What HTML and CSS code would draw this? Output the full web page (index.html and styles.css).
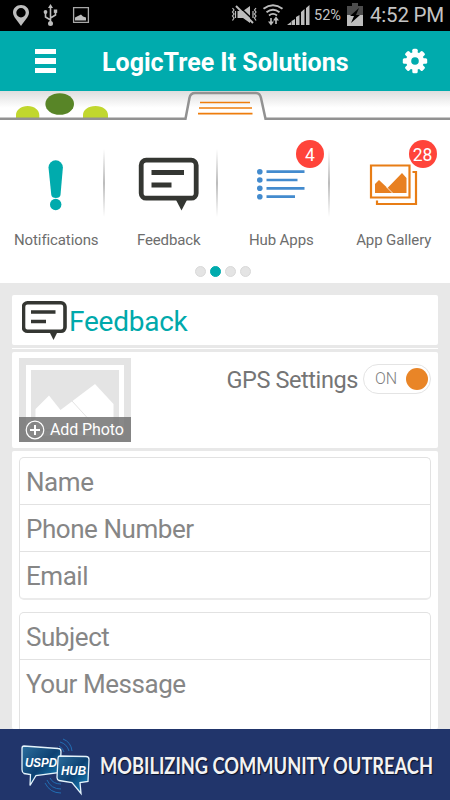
FILE: index.html
```html
<!DOCTYPE html>
<html lang="en">
<head>
    <meta charset="UTF-8">
    <meta name="viewport" content="width=device-width, initial-scale=1.0">
    <title>LogicTree It Solutions</title>
    <link rel="stylesheet" href="styles.css">
</head>
<body>
    <!-- Status bar -->
    <div class="status">
        <svg class="status-left" width="100" height="31" viewBox="0 0 100 31" fill="#bdbdbd">
            <path fill-rule="evenodd" d="M21 5c-4.600 0-8 3.300-8 7.500 0 4.600 5 8.500 8 13.500 3-5 8-8.900 8-13.500C29 8.300 25.600 5 21 5zm0 3a4.700 4.700 0 1 1 0 9.400 4.700 4.700 0 0 1 0-9.400z"/>
            <path d="M50.500 24V7M50.500 20l-5-3v-5M50.500 18l5-3v-4" fill="none" stroke="#bdbdbd" stroke-width="1.600"/>
            <path d="M50.500 4l2.500 4h-5z"/>
            <circle cx="50.500" cy="23.500" r="2.500"/>
            <circle cx="45.500" cy="12" r="1.900"/>
            <path d="M53.800 9.500h3.400v3.400h-3.400z"/>
            <path d="M73.600 7.600h14.800v14.800H73.600z" fill="none" stroke="#a8a8a8" stroke-width="1.300"/>
            <path d="M75 20.500v-3l3-1.500 3-1.500 2 2 3 1v3z"/>
        </svg>
        <svg class="status-right" width="83" height="31" viewBox="0 0 83 31" fill="#bdbdbd">
            <path d="M7.500 11h5.500l7-5v17l-7-5H7.500z"/>
            <path d="M8.500 6l17 16" stroke="#000" stroke-width="1.500"/>
            <path d="M6 6l17 17" stroke="#bdbdbd" stroke-width="2"/>
            <path d="M2.500 8l1.500 2-1.500 2 1.500 2-1.500 2 1.500 2-1.500 2.500M5.500 11v7M26 8l-1.500 2 1.500 2-1.500 2 1.500 2-1.500 2 1.500 2.500M23 11v7" fill="none" stroke="#bdbdbd" stroke-width="1.200"/>
            <g fill="none" stroke="#bdbdbd" stroke-width="1.900">
                <path d="M33.500 8.800q9.500-7 19 0M36.500 12.300q6.500-5 13 0M39 15.400q4-3 8 0"/>
                <path d="M41 18v5M46 24v-5" stroke-width="1.600"/>
            </g>
            <path d="M38 21.500h6l-3 4zM43 20.500h6l-3-4z"/>
            <path d="M57 25l4-3v3zM61.500 21l3.500-2v6h-3.500zM66 17l3.500-2v10h-3.500zM71 12l3.500-3v16h-3.500zM76 8l3.500-3v20h-3.500z"/>
        </svg>
        <span class="percent">52%</span>
        <svg class="battery" width="16" height="31" viewBox="0 0 16 31">
            <path d="M5 3h6v3h5v20H0V6h5z" fill="#4c4c4c"/>
            <path d="M0 15h16v11H0z" fill="#bdbdbd"/>
            <path d="M12 8L3 16h4l-3 7 9-8H9z" fill="#000"/>
        </svg>
        <span class="clock">4:52 PM</span>
    </div>

    <!-- Title bar -->
    <header class="header">
        <div class="burger"><i></i><i></i><i></i></div>
        <h1>LogicTree It Solutions</h1>
        <svg class="gear" width="26" height="26" viewBox="-13 -13 26 26">
            <g fill="#fff">
                <rect id="tooth" x="-2.700" y="-12.200" width="5.400" height="24.400" rx="1.500"/>
                <use href="#tooth" transform="rotate(45)"/>
                <use href="#tooth" transform="rotate(90)"/>
                <use href="#tooth" transform="rotate(135)"/>
                <circle r="9"/>
            </g>
            <circle r="3.800" fill="#00abad"/>
        </svg>
    </header>

    <!-- Pull-down tab -->
    <svg class="tab" width="450" height="30" viewBox="0 0 450 30">
        <defs>
            <linearGradient id="shade" x1="0" y1="0" x2="0" y2="1">
                <stop offset="0" stop-color="#dedede"/>
                <stop offset="0.600" stop-color="#fff"/>
            </linearGradient>
        </defs>
        <rect width="450" height="28" fill="url(#shade)"/>
        <ellipse cx="59.700" cy="13" rx="14.300" ry="10.800" fill="#588527"/>
        <path d="M16 28v-4c0-5 5-9 11.700-9s11.600 4 11.600 9v4zM83 28v-4c0-5 5-9 12.500-9s12.500 4 12.500 9v4z" fill="#c1d72e"/>
        <path d="M0 27.700h185.500l4-21q1-4.700 5.500-4.700h61q4 0 5 5l4.500 20.700H450" fill="none" stroke="#929292" stroke-width="2.500"/>
        <path d="M200 11.500h50M199 17h53M198 22.700h54.500" stroke="#ee7d0c" stroke-width="1.700"/>
    </svg>

    <!-- Icon menu -->
    <nav class="menu">
        <a class="item">
            <svg class="icon" width="70" height="70" viewBox="0 0 70 70" fill="#00abad">
                <path d="M27.500 19.500a7.200 7.200 0 0 1 14.400 0l-2.400 27.500q-.5 3-4.600 3t-4.600-3z"/>
                <circle cx="34.700" cy="56.500" r="5.700"/>
            </svg>
            <span>Notifications</span>
        </a>
        <a class="item">
            <svg class="icon" width="70" height="70" viewBox="0 0 70 70">
                <path d="M41 50h13l-6.500 12.500z" fill="#343632"/>
                <rect x="7.200" y="12.200" width="55" height="38" rx="5" fill="#fff" stroke="#343632" stroke-width="4.800"/>
                <path d="M17.500 24.500H50M17.500 37H37.500" stroke="#343632" stroke-width="5"/>
            </svg>
            <span>Feedback</span>
        </a>
        <a class="item">
            <svg class="icon" width="70" height="70" viewBox="0 0 70 70">
                <path d="M20.500 23.700h38M20.500 32h31M20.500 40.300h38M20.500 48.700h28.500" stroke="#438bce" stroke-width="2.700"/>
                <g fill="#438bce">
                    <circle cx="13.800" cy="23.700" r="2.800"/><circle cx="13.800" cy="32" r="2.800"/>
                    <circle cx="13.800" cy="40.300" r="2.800"/><circle cx="13.800" cy="48.700" r="2.800"/>
                </g>
            </svg>
            <span>Hub Apps</span>
            <b class="badge">4</b>
        </a>
        <a class="item">
            <svg class="icon" width="70" height="70" viewBox="0 0 70 70">
                <g fill="none" stroke="#e87d15" stroke-width="2.200">
                    <path d="M12 17.500h38.500v32H12zM18 52.500v3.500h39v-32h-3.500"/>
                </g>
                <path d="M16 45v-9l4-4 8.500 8L43 25l4.500 5v15z" fill="#e88021"/>
                <path d="M27.500 39l6 6" stroke="#fff" stroke-width=".8"/>
            </svg>
            <span>App Gallery</span>
            <b class="badge">28</b>
        </a>
    </nav>
    <div class="dots"><i></i><i class="on"></i><i></i><i></i></div>

    <!-- Feedback form -->
    <main class="content">
        <section class="card card-title">
            <svg width="46" height="40" viewBox="0 0 46 40">
                <path d="M27 30h9l-4.500 9z" fill="#343632"/>
                <rect x="1.500" y="1.800" width="41.500" height="28.500" rx="4" fill="#fff" stroke="#343632" stroke-width="3.600"/>
                <path d="M9 11h24.500M9 20.500h15" stroke="#343632" stroke-width="3.600"/>
            </svg>
            <h2>Feedback</h2>
        </section>
        <hr class="rule">
        <section class="card card-photo">
            <div class="photo">
                <svg width="112" height="84" viewBox="0 0 112 84">
                    <path d="M0 0h112v84H0z" fill="#e4e4e4"/>
                    <path d="M9.500 9.500h93v66h-93z" fill="#e4e4e4" stroke="#fff" stroke-width="5"/>
                    <path d="M16.500 71V51L30 37.500 41.500 52 76 26l18.500 20v25z" fill="#fff"/>
                    <path d="M53 43l21 23" stroke="#e4e4e4" stroke-width="1"/>
                </svg>
                <div class="add">
                    <svg width="20" height="20" viewBox="0 0 20 20" fill="none" stroke="#fff">
                        <circle cx="10" cy="10" r="8.800" stroke-width="1.200"/>
                        <path d="M10 5v10M5 10h10" stroke-width="2"/>
                    </svg>
                    <span>Add Photo</span>
                </div>
            </div>
            <div class="gps">
                <span>GPS Settings</span>
                <div class="switch"><em>ON</em><i></i></div>
            </div>
        </section>
        <section class="card card-form">
            <div class="group">
                <label class="field">Name</label>
                <label class="field">Phone Number</label>
                <label class="field">Email</label>
            </div>
            <div class="group message">
                <label class="field">Subject</label>
                <label class="field">Your Message</label>
            </div>
        </section>
    </main>

    <!-- Bottom banner -->
    <footer class="banner">
        <svg width="72" height="62" viewBox="0 0 72 62">
            <defs>
                <linearGradient id="blue" x1="0" y1="0" x2="1" y2="1">
                    <stop offset="0" stop-color="#2d6f9e"/>
                    <stop offset="0.500" stop-color="#0d4172"/>
                    <stop offset="1" stop-color="#1592cc"/>
                </linearGradient>
            </defs>
            <g fill="none" stroke="#226eb3" stroke-width="1">
                <path d="M39 12q4 2 5 6M40 8q7 2 9 9M43 5q8 3 9 12"/>
                <path d="M30 44q3 6 11 6M27 46q4 9 14 9M25 49q5 10 16 10"/>
            </g>
            <path d="M4 12l34 2.500q3 0 3 3l-1 21-24 3-6 10 .5-11-6.500-1q-2-1-2-4l0-21q0-2.500 2-2.500z" fill="url(#blue)" stroke="#e4f3fb" stroke-width="1.300"/>
            <path d="M40 22l26 .5q3 0 3 3l-1 22-8 1 1 11-9-11-13-2q-2-1-2-3l1-18.500q0-3 2-3z" fill="url(#blue)" stroke="#e4f3fb" stroke-width="1.300"/>
            <g class="logo-text">
                <text x="5" y="32.500" textLength="32" lengthAdjust="spacingAndGlyphs">USPD</text>
                <text x="41" y="41" textLength="25" lengthAdjust="spacingAndGlyphs" class="hub">HUB</text>
            </g>
        </svg>
        <svg class="slogan" width="345" height="40" viewBox="0 0 345 40">
            <text x="0" y="29" textLength="333" lengthAdjust="spacingAndGlyphs">MOBILIZING COMMUNITY OUTREACH</text>
        </svg>
    </footer>
</body>
</html>
```
FILE: styles.css
```css
* {
    box-sizing: border-box;
}

body {
    margin: 0;
    height: 800px;
    display: flex;
    flex-direction: column;
    overflow: hidden;
    background-color: #fff;
    font-family: Roboto, sans-serif;
}

svg {
    display: block;
    flex: none;
}

i {
    display: block;
}

/* Status bar */
.status {
    flex: none;
    display: flex;
    height: 31px;
    background-color: #000;
    color: #c4c4c4;
    line-height: 31px;
    white-space: nowrap;
}

.status-right {
    margin-left: 130px;
}

.percent {
    width: 34px;
    padding-left: 1px;
    font-size: 14.500px;
    line-height: 32px;
}

.clock {
    margin-left: 7px;
    font-size: 20.500px;
    letter-spacing: -0.2px;
}

/* Title bar */
.header {
    flex: none;
    display: flex;
    align-items: center;
    height: 60px;
    padding-left: 35px;
    background-color: #00abad;
}

.burger {
    display: grid;
    gap: 4px;
    width: 21px;
}

.burger i {
    height: 5.500px;
    background-color: #fff;
}

.header h1 {
    margin: 3px 0 0 46px;
    width: 300px;
    color: #fff;
    font-size: 25px;
    font-weight: 700;
    line-height: 30px;
    white-space: nowrap;
}

/* Icon menu */
.menu {
    flex: none;
    display: grid;
    grid-template-columns: repeat(4, 1fr);
    height: 143px;
}

.item {
    position: relative;
    display: flex;
    flex-direction: column;
    align-items: center;
    padding-top: 27px;
    color: #6d6d6d;
    font-size: 15px;
    line-height: 20px;
    background: linear-gradient(#fff, #bcbcbc 50%, #fff) no-repeat 103px 28px / 2px 68px;
}

.item:last-child {
    background: none;
}

.item span {
    margin-top: 12px;
    letter-spacing: -0.1px;
    white-space: nowrap;
}

.badge {
    position: absolute;
    top: 19px;
    left: 71px;
    width: 28px;
    height: 28px;
    border-radius: 50%;
    background-color: #ff443a;
    color: #fff;
    font-size: 17.500px;
    font-weight: 400;
    line-height: 30px;
    text-align: center;
}

/* Page indicator */
.dots {
    flex: none;
    display: flex;
    justify-content: center;
    gap: 4px;
    height: 19px;
    padding: 2px 5px 0 0;
}

.dots i {
    width: 11px;
    height: 11px;
    border: 1px solid #d9d9d9;
    border-radius: 50%;
    background-color: #e4e4e4;
}

.dots .on {
    border-color: #00abad;
    background-color: #00abad;
}

/* Form area */
.content {
    flex: 1;
    display: flex;
    flex-direction: column;
    min-height: 0;
    padding: 12px 12px 0;
    background-color: #e8e8e8;
    color: #757575;
}

.card {
    flex: none;
    border-radius: 2px;
    background-color: #fff;
}

.card-title {
    display: flex;
    height: 50px;
    padding: 6px 0 0 10px;
}

.card-title h2 {
    margin: 5px 0 0 1px;
    color: #00a9ab;
    font-size: 28px;
    font-weight: 400;
    letter-spacing: -0.25px;
    line-height: 32px;
}

.rule {
    flex: none;
    width: 100%;
    height: 1px;
    margin: 3px 0;
    border: 0;
    background-color: #fff;
}

.card-photo {
    display: flex;
    justify-content: space-between;
    height: 96px;
    padding: 6px 7px;
}

.photo {
    position: relative;
    width: 112px;
    height: 84px;
}

.add {
    position: absolute;
    left: 0;
    bottom: 0;
    display: flex;
    align-items: center;
    gap: 5px;
    width: 112px;
    height: 25px;
    padding-left: 6px;
    background-color: rgba(115, 115, 115, 0.85);
    color: #fff;
    font-size: 16px;
    letter-spacing: -0.1px;
    white-space: nowrap;
}

.gps {
    display: flex;
    gap: 5px;
    height: 30px;
    margin-top: 6px;
    font-size: 23.500px;
    letter-spacing: -0.4px;
    line-height: 32px;
}

.switch {
    display: flex;
    align-items: center;
    justify-content: space-between;
    width: 68px;
    height: 30px;
    padding: 0 2px 0 11px;
    border: 1px solid #e4e4e4;
    border-radius: 15px;
    color: #808080;
    font-size: 16px;
    font-weight: 300;
    letter-spacing: 0;
}

.switch em {
    font-style: normal;
}

.switch i {
    width: 22px;
    height: 22px;
    border-radius: 50%;
    background-color: #e98527;
}

.card-form {
    flex: 1;
    display: flex;
    flex-direction: column;
    min-height: 0;
    margin-top: 3px;
    padding: 6px 7px 0;
}

.group {
    margin-bottom: 12px;
    border: 1px solid #e2e2e2;
    border-bottom: 2px solid #ebebeb;
    border-radius: 5px;
}

.field {
    display: block;
    height: 47px;
    padding-left: 6px;
    border-bottom: 1px solid #e2e2e2;
    color: #868686;
    font-size: 26px;
    letter-spacing: -0.45px;
    line-height: 49px;
}

.field:last-child {
    height: 46px;
    border-bottom: 0;
}

.message {
    flex: 1;
    margin-bottom: 0;
    border-bottom: 0;
    border-radius: 5px 5px 0 0;
}

/* Bottom banner */
.banner {
    flex: none;
    display: flex;
    align-items: center;
    height: 71px;
    padding-left: 20px;
    background-color: #21356b;
}

.slogan {
    margin-left: 8px;
    fill: #f3f3f3;
    font: 700 23px Lato, sans-serif;
    text-shadow: 1px 1px 1px #0a1128;
}

.logo-text {
    fill: #fff;
    font: italic bold 13.500px "Liberation Sans", sans-serif;
}

.logo-text .hub {
    font-size: 12px;
}
```
